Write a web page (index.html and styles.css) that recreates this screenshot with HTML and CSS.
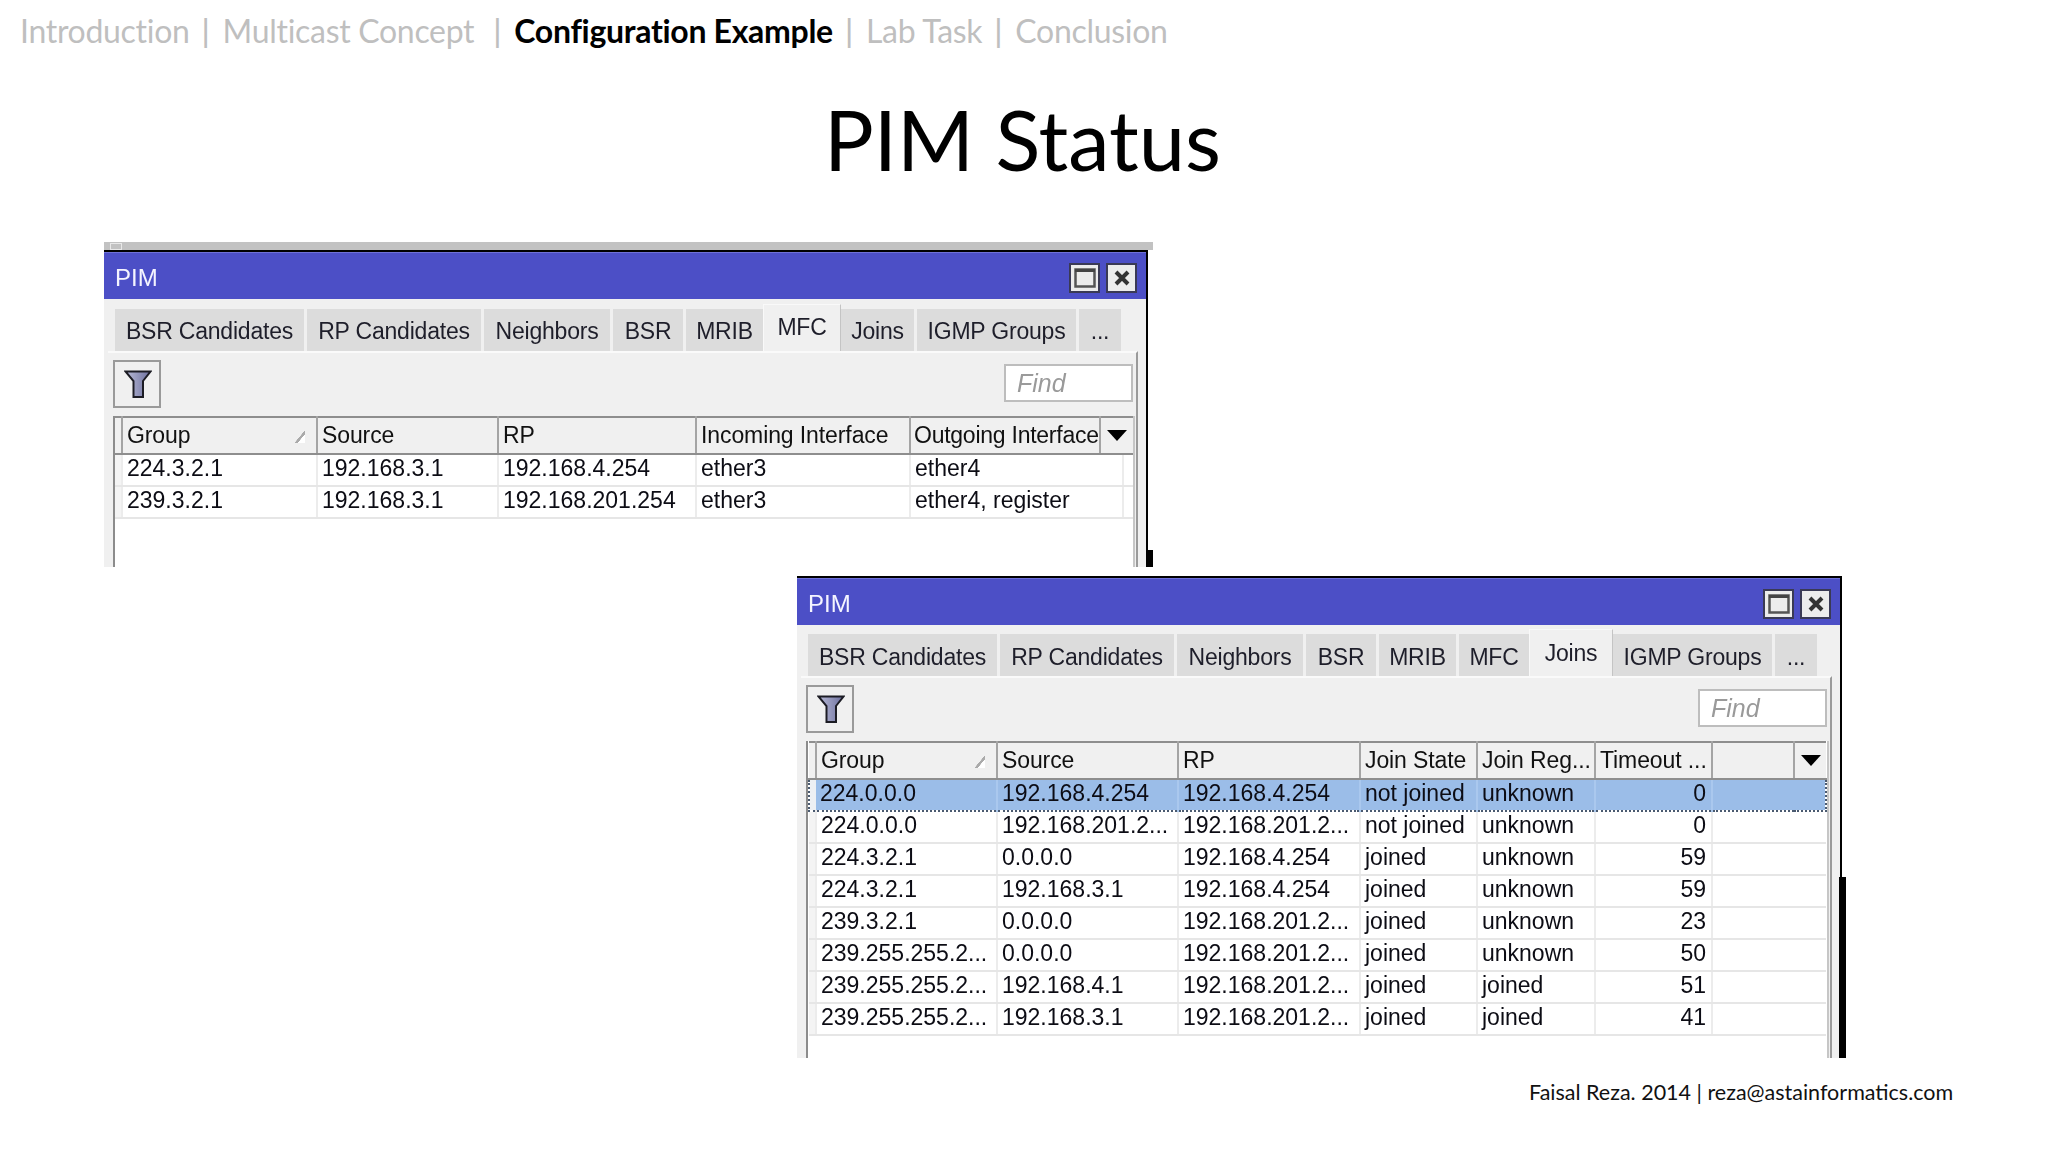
FILE: index.html
```html
<!DOCTYPE html>
<html lang="en">
<head>
<meta charset="utf-8">
<title>PIM Status</title>
<link rel="stylesheet" href="styles.css">
</head>
<body>
<div class="slide">
  <nav class="crumbs">
    <span>Introduction</span><i>|</i><span>Multicast Concept</span><i class="wide">|</i><b>Configuration Example</b><i>|</i><span>Lab Task</span><i>|</i><span>Conclusion</span>
  </nav>
  <h1 class="title">PIM Status</h1>

  <section class="win win-one">
    <div class="strip"><span class="strip-mark"></span></div>
    <div class="frame">
      <header class="titlebar">
        <span class="win-name">PIM</span>
        <span class="win-btn"><svg width="22" height="20" viewBox="0 0 22 20"><rect x="1.5" y="1.5" width="19" height="17" fill="none" stroke="#555" stroke-width="2.5"/><rect x="1" y="1" width="20" height="3" fill="#444"/></svg></span>
        <span class="win-btn"><svg width="18" height="18" viewBox="0 0 18 18"><path d="M3 3L15 15M15 3L3 15" stroke="#333" stroke-width="4"/></svg></span>
      </header>
      <div class="tabs">
        <span class="tab t-bsrc">BSR Candidates</span><span class="tab t-rpc">RP Candidates</span><span class="tab t-nei">Neighbors</span><span class="tab t-bsr">BSR</span><span class="tab t-mrib">MRIB</span><span class="tab t-mfc active">MFC</span><span class="tab t-joins">Joins</span><span class="tab t-igmp">IGMP Groups</span><span class="tab t-more">...</span>
      </div>
      <div class="panel">
        <div class="toolbar">
          <span class="filter"><svg width="28" height="30" viewBox="0 0 28 30"><defs><linearGradient id="fa" x1="0" x2="1" y1="0" y2="0"><stop offset="0" stop-color="#b9bbd6"/><stop offset="1" stop-color="#6d709f"/></linearGradient></defs><path d="M1.5 2.5H26.5L19 12V28H9.5V12Z" fill="url(#fa)" stroke="#1c1c24" stroke-width="2"/></svg></span>
          <span class="find">Find</span>
        </div>
        <div class="list">
          <table class="grid grid-mfc">
            <colgroup><col class="c-sel"><col class="c-a"><col class="c-b"><col class="c-c"><col class="c-d"><col class="c-e"><col class="c-f"><col class="c-g"></colgroup>
            <thead><tr><th></th><th class="sorted">Group<span class="sort"></span></th><th>Source</th><th>RP</th><th>Incoming Interface</th><th class="tight">Outgoing Interface</th><th class="menu" colspan="2"><span class="arrow"></span></th></tr></thead>
            <tbody>
              <tr><td class="sel"></td><td>224.3.2.1</td><td>192.168.3.1</td><td>192.168.4.254</td><td>ether3</td><td colspan="2">ether4</td><td></td></tr>
              <tr><td class="sel"></td><td>239.3.2.1</td><td>192.168.3.1</td><td>192.168.201.254</td><td>ether3</td><td colspan="2">ether4, register</td><td></td></tr>
            </tbody>
          </table>
        </div>
      </div>
    </div>
    <span class="edge edge-one"></span>
  </section>

  <section class="win win-two">
    <div class="frame">
      <header class="titlebar">
        <span class="win-name">PIM</span>
        <span class="win-btn"><svg width="22" height="20" viewBox="0 0 22 20"><rect x="1.5" y="1.5" width="19" height="17" fill="none" stroke="#555" stroke-width="2.5"/><rect x="1" y="1" width="20" height="3" fill="#444"/></svg></span>
        <span class="win-btn"><svg width="18" height="18" viewBox="0 0 18 18"><path d="M3 3L15 15M15 3L3 15" stroke="#333" stroke-width="4"/></svg></span>
      </header>
      <div class="tabs">
        <span class="tab t-bsrc">BSR Candidates</span><span class="tab t-rpc">RP Candidates</span><span class="tab t-nei">Neighbors</span><span class="tab t-bsr">BSR</span><span class="tab t-mrib">MRIB</span><span class="tab t-mfc2">MFC</span><span class="tab t-joins2 active">Joins</span><span class="tab t-igmp">IGMP Groups</span><span class="tab t-more">...</span>
      </div>
      <div class="panel">
        <div class="toolbar">
          <span class="filter"><svg width="28" height="30" viewBox="0 0 28 30"><defs><linearGradient id="fb" x1="0" x2="1" y1="0" y2="0"><stop offset="0" stop-color="#b9bbd6"/><stop offset="1" stop-color="#6d709f"/></linearGradient></defs><path d="M1.5 2.5H26.5L19 12V28H9.5V12Z" fill="url(#fb)" stroke="#1c1c24" stroke-width="2"/></svg></span>
          <span class="find">Find</span>
        </div>
        <div class="list">
          <table class="grid grid-joins">
            <colgroup><col class="c-sel"><col class="c-a"><col class="c-b"><col class="c-c"><col class="c-d"><col class="c-e"><col class="c-f"><col class="c-g"><col class="c-h"></colgroup>
            <thead><tr><th></th><th class="sorted">Group<span class="sort"></span></th><th>Source</th><th>RP</th><th>Join State</th><th>Join Reg...</th><th>Timeout ...</th><th></th><th class="menu"><span class="arrow"></span></th></tr></thead>
            <tbody>
              <tr class="picked"><td class="sel"></td><td>224.0.0.0</td><td>192.168.4.254</td><td>192.168.4.254</td><td>not joined</td><td>unknown</td><td class="num">0</td><td class="open"></td><td></td></tr>
              <tr><td class="sel"></td><td>224.0.0.0</td><td>192.168.201.2...</td><td>192.168.201.2...</td><td>not joined</td><td>unknown</td><td class="num">0</td><td class="open"></td><td></td></tr>
              <tr><td class="sel"></td><td>224.3.2.1</td><td>0.0.0.0</td><td>192.168.4.254</td><td>joined</td><td>unknown</td><td class="num">59</td><td class="open"></td><td></td></tr>
              <tr><td class="sel"></td><td>224.3.2.1</td><td>192.168.3.1</td><td>192.168.4.254</td><td>joined</td><td>unknown</td><td class="num">59</td><td class="open"></td><td></td></tr>
              <tr><td class="sel"></td><td>239.3.2.1</td><td>0.0.0.0</td><td>192.168.201.2...</td><td>joined</td><td>unknown</td><td class="num">23</td><td class="open"></td><td></td></tr>
              <tr><td class="sel"></td><td>239.255.255.2...</td><td>0.0.0.0</td><td>192.168.201.2...</td><td>joined</td><td>unknown</td><td class="num">50</td><td class="open"></td><td></td></tr>
              <tr><td class="sel"></td><td>239.255.255.2...</td><td>192.168.4.1</td><td>192.168.201.2...</td><td>joined</td><td>joined</td><td class="num">51</td><td class="open"></td><td></td></tr>
              <tr><td class="sel"></td><td>239.255.255.2...</td><td>192.168.3.1</td><td>192.168.201.2...</td><td>joined</td><td>joined</td><td class="num">41</td><td class="open"></td><td></td></tr>
            </tbody>
          </table>
        </div>
      </div>
    </div>
    <span class="edge edge-two"></span>
  </section>

  <footer class="credit">Faisal Reza. 2014 | reza@astainformatics.com</footer>
</div>
</body>
</html>
```
FILE: styles.css
```css
* { box-sizing: border-box; }
html, body { margin: 0; padding: 0; background: #fff; }
.slide { position: relative; width: 2048px; height: 1152px; overflow: hidden; display: flex; flex-direction: column; font-family: Lato, "Open Sans", sans-serif; color: #000; }

.crumbs { display: flex; align-items: center; height: 40px; margin-top: 10px; padding-left: 20px; font-size: 32px; color: #bfbfbf; white-space: nowrap; letter-spacing: -0.3px; }
.crumbs i { font-family: "Liberation Sans", sans-serif; font-style: normal; margin: 0 13px 0 12px; }
.crumbs i.wide { margin: 0 13px 0 19px; }
.crumbs b { color: #000; font-weight: 700; }

.title { margin: 39px 0 0; padding-right: 3px; text-align: center; font-size: 83px; line-height: 100px; font-weight: 400; }

.win { position: absolute; font-family: "Liberation Sans", Arial, sans-serif; font-size: 23px; color: #111; filter: blur(0.4px); }
.win-one { left: 104px; top: 242px; width: 1049px; height: 325px; }
.win-two { left: 797px; top: 576px; width: 1049px; height: 482px; }

.strip { height: 8px; background: #c2c2c2; position: relative; }
.strip-mark { position: absolute; left: 6px; top: 1px; width: 12px; height: 7px; border: 1px solid #e8e8e8; }

.frame { display: flex; flex-direction: column; border-top: 2px solid #000; border-right: 2px solid #000; background: #f0f0f0; overflow: hidden; }
.win-one .frame { width: 1044px; height: 317px; }
.win-two .frame { width: 1045px; height: 482px; }

.titlebar { display: flex; align-items: center; gap: 6px; height: 47px; padding: 3px 9px 0 11px; background: #4c4fc6; border-top: 1px solid #6f71d8; flex: none; }
.win-name { margin-right: auto; color: #f4f4ff; font-size: 24px; }
.win-btn { display: flex; align-items: center; justify-content: center; width: 31px; height: 30px; background: #ececec; border: 2px solid #3a3a55; }

.tabs { display: flex; align-items: flex-end; gap: 3px; height: 52px; padding-left: 11px; flex: none; }
.win-two .tabs { height: 51px; }
.tab { display: flex; align-items: center; justify-content: center; height: 42px; padding-top: 3px; background: #dcdcdc; white-space: nowrap; color: #1e1e2a; letter-spacing: -0.2px; }
.win-two .tab { padding-top: 5px; }
.tab.active, .win-two .tab.active { height: 47px; margin: 0 -3px; padding-bottom: 4px; background: #f0f0f0; border: 1px solid #f9f9f9; border-bottom: 0; border-right-color: #c4c4c4; position: relative; }
.t-bsrc { width: 189px; }
.t-rpc { width: 174px; }
.t-nei { width: 126px; }
.t-bsr { width: 70px; }
.t-mrib { width: 77px; }
.t-mfc { width: 78px; }
.t-joins { width: 73px; }
.t-mfc2 { width: 70px; }
.t-joins2 { width: 84px; }
.t-igmp { width: 159px; }
.t-more { width: 42px; }

.panel { flex: 1; display: flex; flex-direction: column; margin-left: 4px; padding-left: 5px; border-top: 2px solid #fafafa; border-right: 2px solid #9a9a9a; margin-right: 8px; min-height: 0; }
.toolbar { display: flex; align-items: flex-start; justify-content: space-between; height: 63px; padding-top: 7px; flex: none; }
.filter { display: flex; align-items: center; justify-content: center; width: 48px; height: 48px; padding-left: 2px; border: 2px solid #9a9a9a; background: #f0f0f0; }
.find { width: 129px; height: 38px; margin: 4px 3px 0 0; padding-left: 11px; font-size: 25px; line-height: 35px; background: #fff; border: 2px solid #bdbdbd; color: #9a9a9a; font-style: italic; }

.list { flex: 1; margin-right: 1px; background: #fff; border-left: 2px solid #8c8c8c; border-right: 2px solid #c6c6c6; min-height: 0; overflow: hidden; }
.grid { border-collapse: collapse; table-layout: fixed; width: 100%; }
.grid th { height: 37px; padding: 0 0 0 4px; text-align: left; font-weight: 400; letter-spacing: -0.1px; background: #f0f0f0; border-top: 2px solid #8e8e8e; border-bottom: 2px solid #8e8e8e; border-right: 2px solid #a4a4a4; white-space: nowrap; overflow: hidden; position: relative; }
.grid td { height: 32px; padding: 0 0 3px 4px; border-bottom: 2px solid #e6e6e6; border-right: 2px solid #ececec; white-space: nowrap; overflow: hidden; color: #0c0c14; }
.grid td:last-child, .grid th:last-child, .grid td.open { border-right: 0; }
.grid td.sel { background: #f4f4f4; padding: 0; }
.grid td.num { text-align: right; padding: 0 5px 3px 0; }
.grid th.tight { padding-left: 3px; letter-spacing: -0.25px; }
.grid th.menu { padding: 0; }

.sort { position: absolute; right: 11px; top: 13px; width: 10px; height: 12px; background: linear-gradient(to bottom right, transparent 46%, #aaa 48%, #aaa 62%, #fff 64%); }
.arrow { display: block; width: 0; height: 0; margin: 0 auto; border-left: 10px solid transparent; border-right: 10px solid transparent; border-top: 11px solid #000; }

.grid-mfc .c-sel { width: 7px; }
.grid-mfc .c-a { width: 195px; }
.grid-mfc .c-b { width: 181px; }
.grid-mfc .c-c { width: 198px; }
.grid-mfc .c-d { width: 214px; }
.grid-mfc .c-e { width: 190px; }
.grid-mfc .c-f { width: 23px; }
.grid-joins .c-sel { width: 7px; }
.grid-joins .c-a { width: 181px; }
.grid-joins .c-b { width: 181px; }
.grid-joins .c-c { width: 182px; }
.grid-joins .c-d { width: 117px; }
.grid-joins .c-e { width: 118px; }
.grid-joins .c-f { width: 117px; }
.grid-joins .c-g { width: 82px; }

.picked td { background: #9bbde8; border-bottom: 2px dotted #4a5a70; border-right-color: #aac8ee; }
.picked td.sel { background: #eef0f4; border-left: 2px dotted #4a5a70; border-right: 0; }
.picked td:last-child { border-right: 2px dotted #4a5a70; }

.edge { position: absolute; right: 0; background: #000; width: 7px; }
.edge-one { bottom: 0; height: 17px; }
.edge-two { bottom: 0; height: 181px; }

.credit { position: absolute; left: 1529px; top: 1079px; font-size: 21.5px; line-height: 26px; color: #111; white-space: nowrap; }
```
